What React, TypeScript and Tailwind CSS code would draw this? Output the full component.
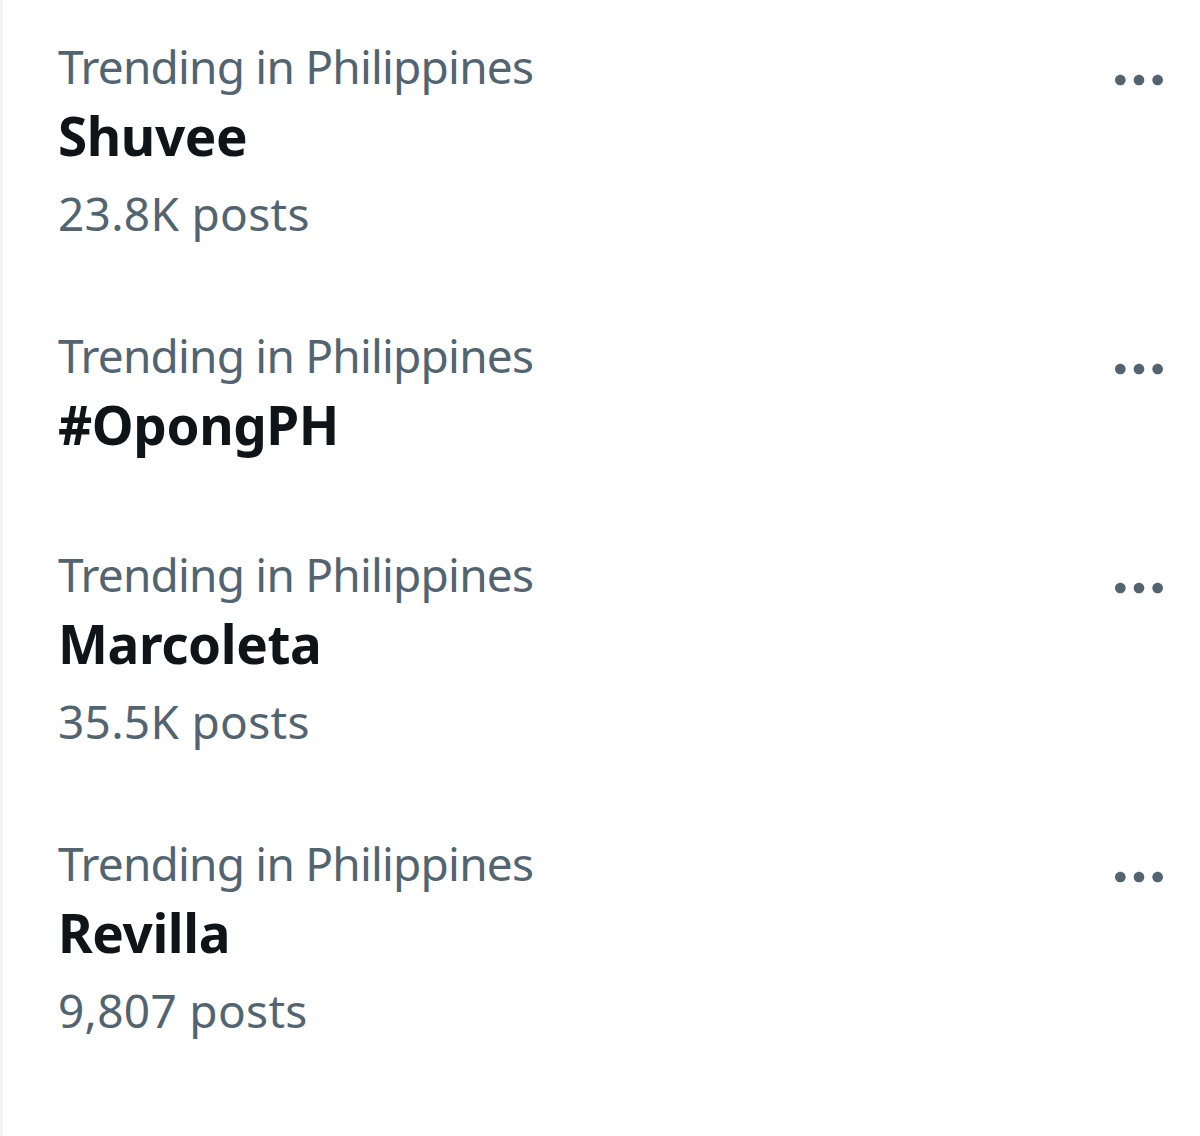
const trends = [
  { label: "Trending in Philippines", name: "Shuvee", posts: "23.8K posts" },
  { label: "Trending in Philippines", name: "#OpongPH" },
  { label: "Trending in Philippines", name: "Marcoleta", posts: "35.5K posts" },
  { label: "Trending in Philippines", name: "Revilla", posts: "9,807 posts" },
]

function MoreIcon() {
  return (
    <svg viewBox="0 0 24 24" className="h-[64px] w-[64px] fill-[#536471]">
      <path d="M3 12c0-1.1.9-2 2-2s2 .9 2 2-.9 2-2 2-2-.9-2-2zm9 2c1.1 0 2-.9 2-2s-.9-2-2-2-2 .9-2 2 .9 2 2 2zm7 0c1.1 0 2-.9 2-2s-.9-2-2-2-2 .9-2 2 .9 2 2 2z" />
    </svg>
  )
}

export default function App() {
  return (
    <div
      className="h-[1136px] w-[1200px] overflow-hidden border-l-[3px] border-[#f1f3f4] bg-white"
      style={{ fontFamily: '"Noto Sans", "Open Sans", sans-serif' }}
    >
      {trends.map((t) => (
        <div key={t.name} className="flex items-start justify-between pl-[55px] pr-[29px] pt-[38px] pb-[48px]">
          <div className="flex flex-col">
            <span className="text-[46px] leading-[56px] tracking-[-0.8px] text-[#536471]">{t.label}</span>
            <span className="pt-[7px] text-[53px] font-bold leading-[70px] tracking-[-0.4px] text-[#0f1419]">{t.name}</span>
            {t.posts && (
              <span className="pt-[14px] text-[46px] leading-[56px] tracking-[0.3px] text-[#536471]">{t.posts}</span>
            )}
          </div>
          <div className="mt-[10px] flex items-center justify-center">
            <MoreIcon />
          </div>
        </div>
      ))}
    </div>
  )
}
